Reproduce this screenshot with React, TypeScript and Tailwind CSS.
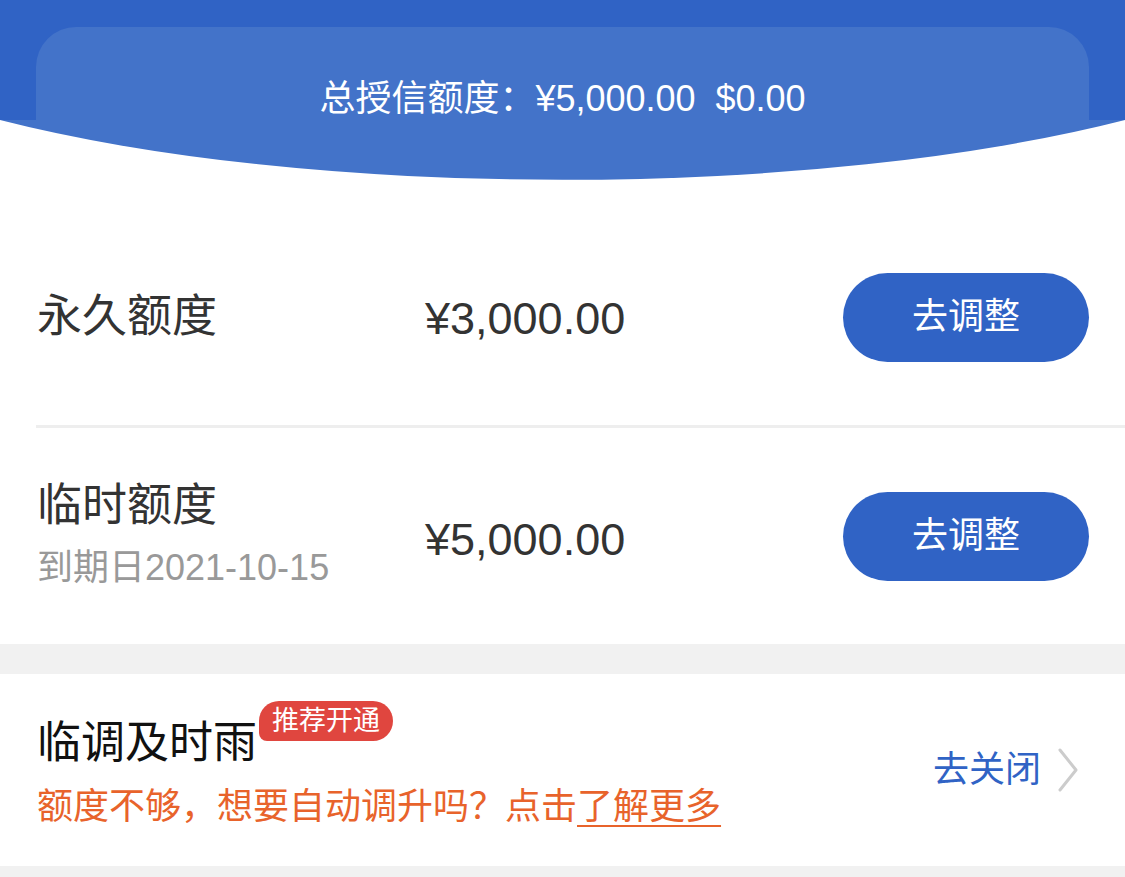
import React from "react";

const font = { fontFamily: '"Liberation Sans", "Noto Sans CJK SC", sans-serif' };

function Row({
  label,
  sub,
  amount,
}: {
  label: string;
  sub?: string;
  amount: string;
}) {
  return (
    <div className="flex h-[216px] items-center pl-[37px] pr-[36px]">
      <div className="flex w-[388px] flex-col">
        <div className="text-[45px] leading-[64px] text-[#333333]">{label}</div>
        {sub && <div className="text-[36px] leading-[60px] text-[#999999]">{sub}</div>}
      </div>
      <div className={`text-[45px] leading-[64px] text-[#333333] ${sub ? "mt-[8px]" : "mt-[4px]"}`}>{amount}</div>
      <button className="ml-auto flex h-[89px] w-[246px] items-center justify-center rounded-full bg-[#3063c5] text-[36px] text-white">
        去调整
      </button>
    </div>
  );
}

export default function App() {
  return (
    <div className="min-h-[877px] w-[1125px] bg-[#f1f1f1]" style={font}>
      {/* header */}
      <div className="bg-white">
        <div className="h-[120px] bg-[#3063c5] px-[36px] pt-[27px]">
          <div className="h-[93px] rounded-t-[40px] bg-[#4373c9] pt-[47px] text-center text-[36px] leading-[50px] text-white">
            总授信额度：¥5,000.00&nbsp;&nbsp;$0.00
          </div>
        </div>
        <svg className="block h-[60px] w-full" viewBox="0 0 1125 60" preserveAspectRatio="none">
          <path d="M0 0 H1125 A800 207 0 0 1 0 0 Z" fill="#4373c9" />
        </svg>
        <div className="pt-[29px]">
          <Row label="永久额度" amount="¥3,000.00" />
          <div className="ml-[36px] h-[3px] bg-[#eeeeee]" />
          <Row label="临时额度" sub="到期日2021-10-15" amount="¥5,000.00" />
        </div>
      </div>

      <div className="h-[30px]" />

      <div className="flex h-[192px] items-center bg-white pl-[37px] pr-[46px]">
        <div className="mt-[10px] flex flex-col">
          <div className="flex items-start">
            <span className="text-[44px] leading-[64px] text-[#111111]">临调及时雨</span>
            <span className="ml-[2px] mt-[-10px] flex h-[40px] w-[134px] items-center justify-center rounded-tl-[20px] rounded-tr-[20px] rounded-br-[20px] rounded-bl-[8px] bg-[#e0463f] text-[27px] leading-none text-white">
              推荐开通
            </span>
          </div>
          <div className="text-[36px] leading-[64px] text-[#e8632b]">
            额度不够，想要自动调升吗？点击<span className="underline decoration-[2px] underline-offset-[6px]">了解更多</span>
          </div>
        </div>
        <div className="ml-auto flex items-center gap-[16px]">
          <span className="text-[36px] leading-[50px] text-[#3063c5]">去关闭</span>
          <svg width="22" height="44" viewBox="0 0 22 44" fill="none">
            <path d="M3 2 L19 22 L3 42" stroke="#cccccc" strokeWidth="3" strokeLinecap="round" strokeLinejoin="round" />
          </svg>
        </div>
      </div>
    </div>
  );
}
